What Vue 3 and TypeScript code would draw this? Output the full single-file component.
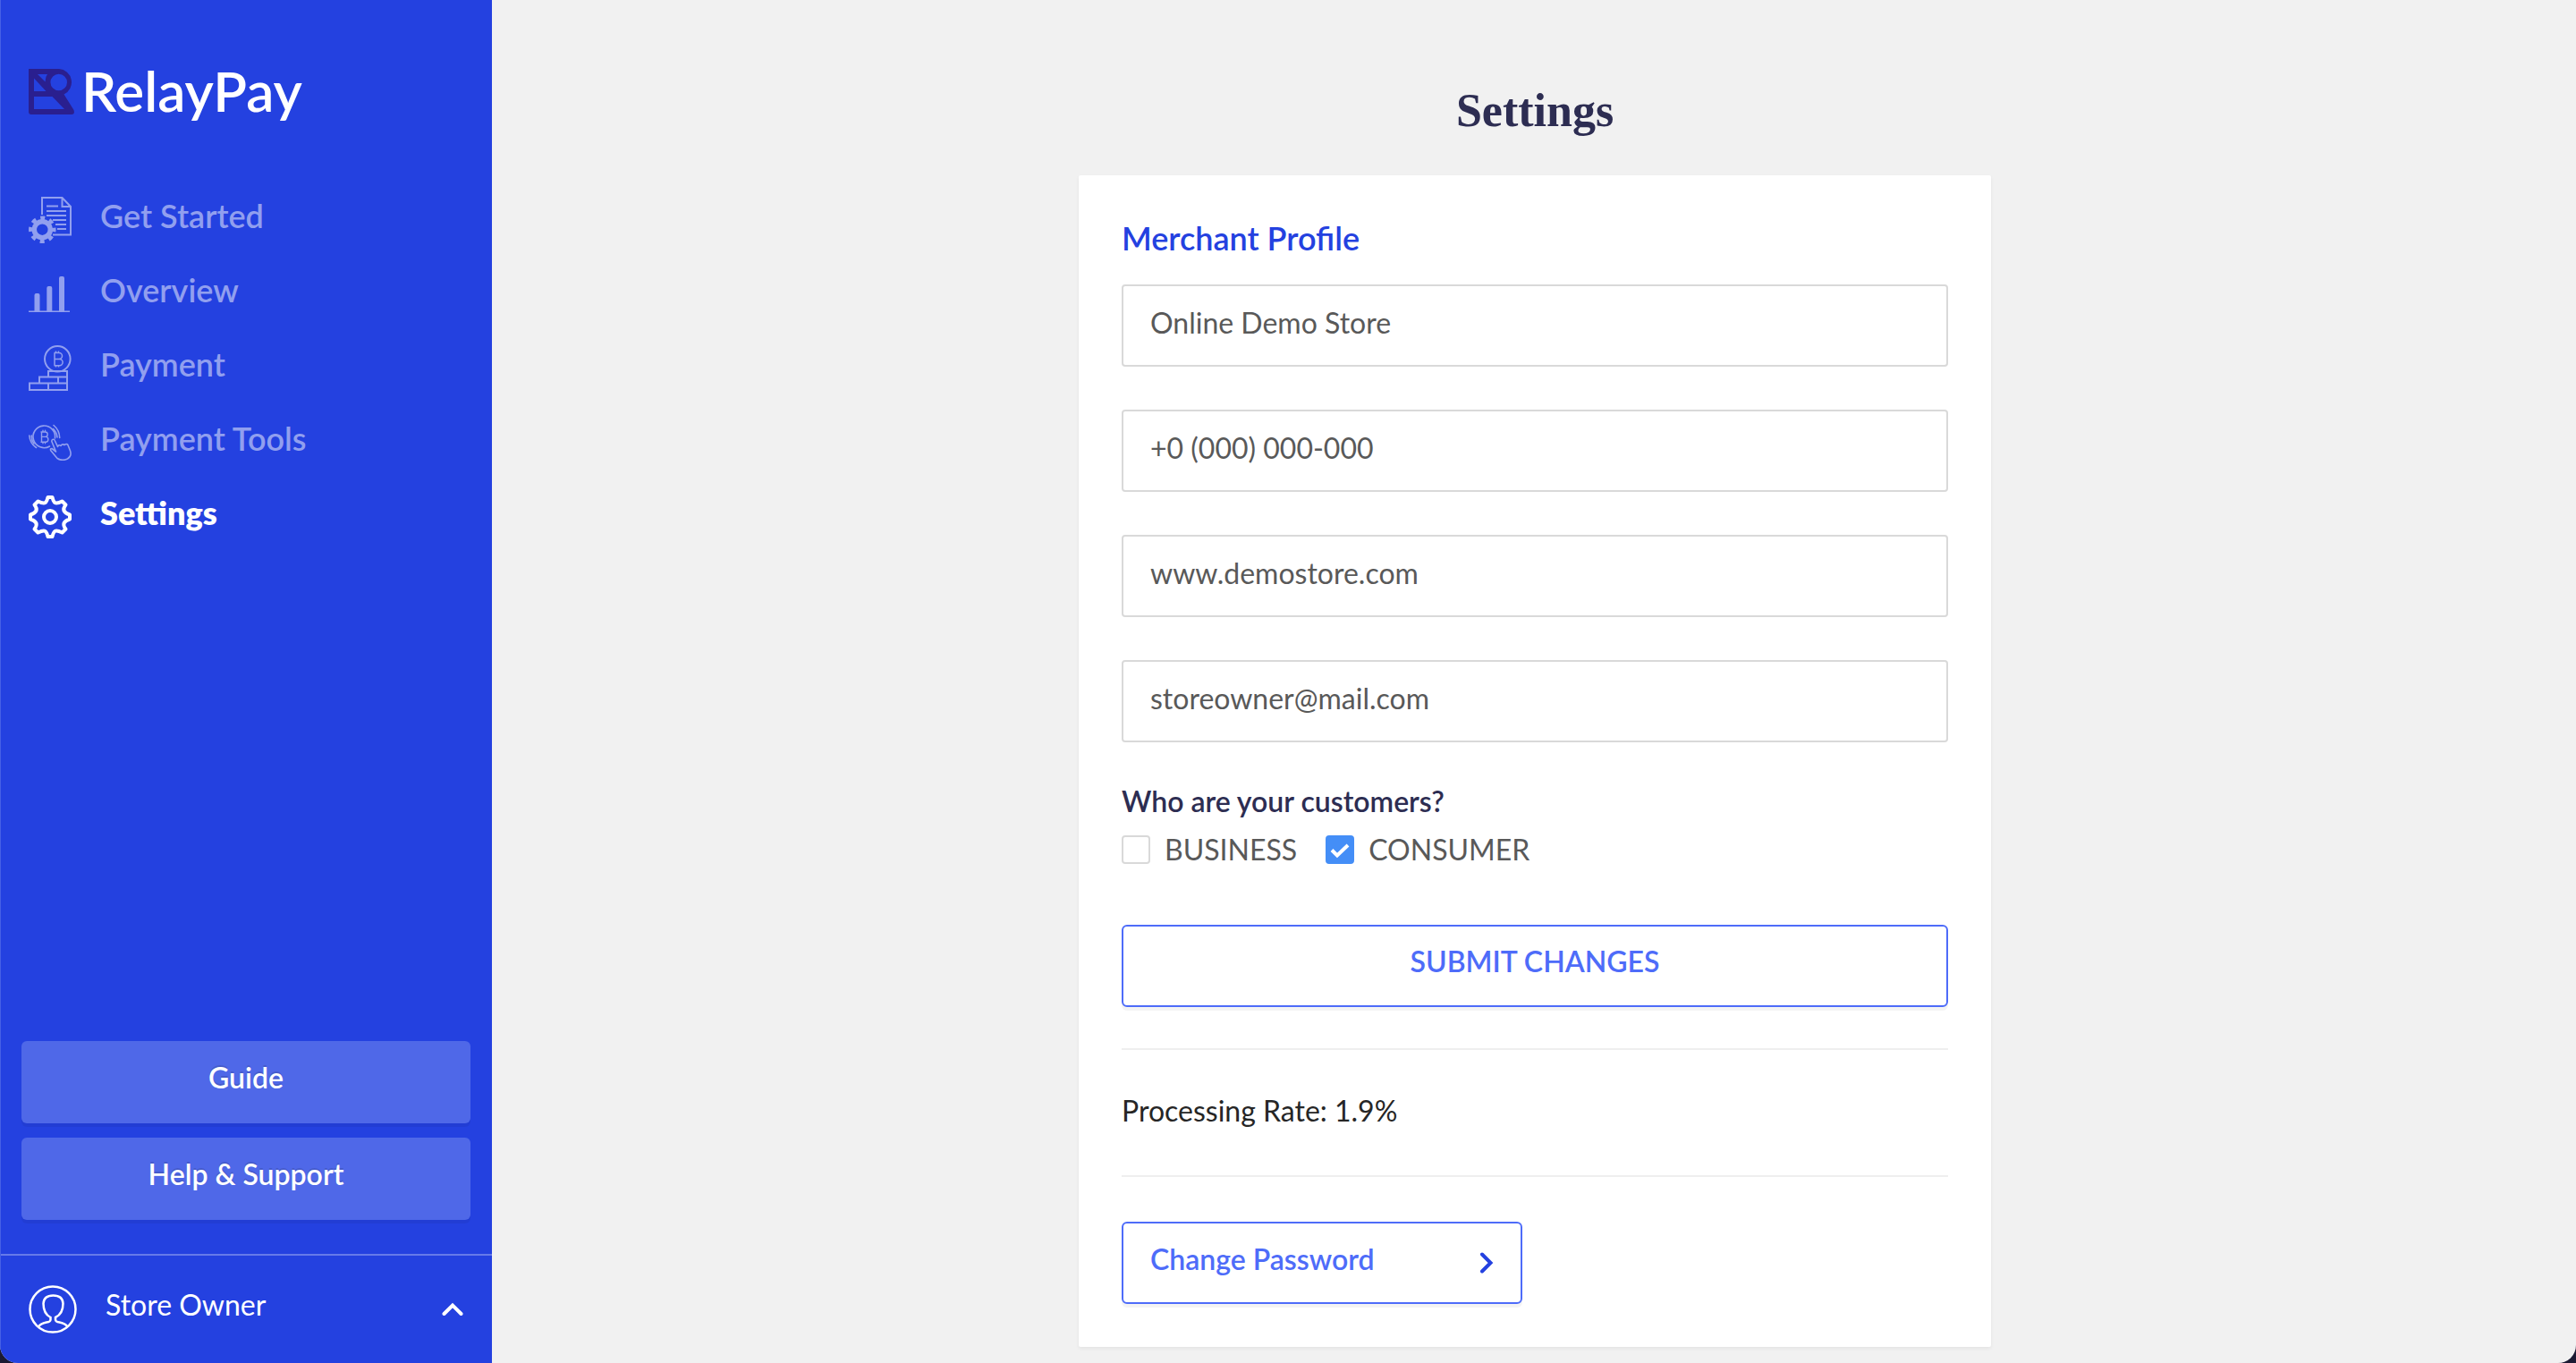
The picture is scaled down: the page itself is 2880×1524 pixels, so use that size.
<script setup lang="ts">
import { reactive, ref } from 'vue'

interface NavItem {
  id: string
  label: string
}

const navItems: NavItem[] = [
  { id: 'start', label: 'Get Started' },
  { id: 'overview', label: 'Overview' },
  { id: 'payment', label: 'Payment' },
  { id: 'tools', label: 'Payment Tools' },
  { id: 'settings', label: 'Settings' },
]
const activeId = ref('settings')

const profile = reactive({
  name: 'Online Demo Store',
  phone: '+0 (000) 000-000',
  website: 'www.demostore.com',
  email: 'storeowner@mail.com',
})

const customers = reactive({ business: false, consumer: true })
</script>

<template>
  <div class="shell">
    <aside class="sidebar">
      <a class="brand" href="#">
        <svg class="brand-mark" viewBox="0 0 51 51" width="51" height="51" aria-hidden="true">
          <path
            fill="#2a1f8f"
            fill-rule="evenodd"
            d="M0 0H34A15 15 0 0 1 39.500 28.500L50.500 46Q52 51 48 51H3Q0 51 0 48ZM33.700 5.700a9.300 9.300 0 1 0 0 18.600a9.300 9.300 0 1 0 0-18.600ZM10 6H21Q18.500 9 18.600 14.500ZM6 10.500V25H19.500ZM6 31V45H40L26.500 31Z"
          />
        </svg>
        <span class="brand-name">RelayPay</span>
      </a>

      <nav class="nav">
        <a
          v-for="item in navItems"
          :key="item.id"
          href="#"
          class="nav-link"
          :class="{ active: item.id === activeId }"
          @click.prevent="activeId = item.id"
        >
          <span class="nav-icon">
            <svg v-if="item.id === 'start'" viewBox="0 0 48 52" width="48" height="52" fill="none" stroke="currentColor" stroke-width="2">
              <path d="M15 20V1H37.500L47 11V42.500H27M37.500 1V11H47" />
              <path d="M20 10.500H33M20 16H42M20 21H42M27 26H42M30 31H42M32 36H42" />
              <circle cx="15.300" cy="36.700" r="9" stroke-width="5.500" />
              <circle cx="15.300" cy="36.700" r="13" stroke-width="4.500" stroke-dasharray="5 5.210" stroke-dashoffset="2.500" />
            </svg>
            <svg v-else-if="item.id === 'overview'" viewBox="0 0 48 40" width="48" height="40" fill="currentColor">
              <path d="M0 38.500H46V40H0Z" />
              <path d="M6.500 39V21Q6.500 19 8.500 19H10.500Q12.500 19 12.500 21V39ZM20.300 39V13Q20.300 11 22.300 11H24.300Q26.300 11 26.300 13V39ZM34 39V2Q34 0 36 0H38Q40 0 40 2V39Z" />
            </svg>
            <svg v-else-if="item.id === 'payment'" viewBox="0 0 48 51" width="48" height="51" fill="none" stroke="currentColor" stroke-width="2">
              <circle cx="32.300" cy="15.300" r="14.300" />
              <path stroke-width="1.500" d="M28.500 8.500H34a3.400 3.400 0 0 1 0 7H29M34.500 15.500a3.500 3.500 0 0 1 0 7.200H28.500M29 8.500V22.700M30.500 6.500V8.500M33.500 6.500V8.500M30.500 22.700V24.500M33.500 22.700V24.500" />
              <path d="M22 29H43V35.500H22ZM12 35.500H43V42.500H12ZM33 35.500V42.500M1 42.500H43V50H1ZM22 42.500V50" />
            </svg>
            <svg v-else-if="item.id === 'tools'" viewBox="0 0 48 41" width="48" height="41" fill="none" stroke="currentColor" stroke-width="1.600" stroke-linecap="round" stroke-linejoin="round">
              <path d="M23.500 25A12.300 12.300 0 1 1 29.500 16" />
              <path stroke-width="1.400" d="M14 9H18.500a2.600 2.600 0 0 1 0 5.400H14.500M19 14.400a2.900 2.900 0 0 1 0 5.800H14M14.500 9V20.200M16 7.300V9M18.500 7.300V9M16 20.200V21.800M18.500 20.200V21.800" />
              <path d="M28 1.500Q34.500 7 34.700 15.500M27.500 5.500Q31.500 9.500 32 15M.8 13Q1.500 22 8.500 26.500M3.300 13Q3 18 6 22" />
              <path d="M30.500 31L25.800 19.500Q25.800 17 28 17.300Q29 17.500 29.500 19L32.500 25.500Q33.500 22.500 36 24.500Q37.500 22 40 23.500Q43.500 21 44.500 25L46.500 30Q48.500 36 43.500 39Q37.500 42 32 38.500L25 30Q23.500 27.500 26 27.500L30.500 31" />
            </svg>
            <svg v-else viewBox="0 0 48 48" width="48" height="48" fill="none" stroke="currentColor" stroke-width="4" stroke-linejoin="round">
              <path d="M21.500 2H26.500Q28 8.500 31 8.500Q33.500 8.500 37.500 6.500L41.500 10.500Q38.500 14 39.500 17Q41 20 46 21.500V26.500Q41 28 39.500 31Q38.500 34 41.500 37.500L37.500 41.500Q33.500 39.500 31 39.500Q28 39.500 26.500 46H21.500Q20 39.500 17 39.500Q14.500 39.500 10.500 41.500L6.500 37.500Q9.500 34 8.500 31Q7 28 2 26.500V21.500Q7 20 8.500 17Q9.500 14 6.500 10.500L10.500 6.500Q14.500 8.500 17 8.500Q20 8.500 21.500 2Z" />
              <circle cx="24" cy="24" r="7" />
            </svg>
          </span>
          <span class="nav-label">{{ item.label }}</span>
        </a>
      </nav>

      <div class="side-actions">
        <button type="button" class="side-button">Guide</button>
        <button type="button" class="side-button">Help &amp; Support</button>
      </div>

      <button type="button" class="account">
        <svg viewBox="0 0 54 54" width="54" height="54" fill="none" stroke="currentColor" stroke-width="2.500" aria-hidden="true">
          <circle cx="27" cy="27" r="25.500" />
          <path d="M11 46.500Q13 43 20 41.500Q24.500 41 24.500 38.500V36Q16.500 32 16.500 20.500Q17 11.500 27.500 11.500Q38 11.500 38.500 20.500Q38.500 32 30 36V38.500Q30 41 34.500 41.500Q41.500 43 43.500 46.500" />
        </svg>
        <span class="account-name">Store Owner</span>
        <svg viewBox="0 0 24 16" width="24" height="16" fill="none" stroke="currentColor" stroke-width="4" stroke-linecap="round" aria-hidden="true">
          <path d="M2.500 13L12 3.500L21.500 13" />
        </svg>
      </button>
    </aside>

    <main class="content">
      <h1 class="title">Settings</h1>

      <section class="card">
        <form @submit.prevent>
          <h2 class="section-title">Merchant Profile</h2>
          <div class="fields">
            <input v-model="profile.name" class="field" type="text" aria-label="Store name" />
            <input v-model="profile.phone" class="field" type="tel" aria-label="Phone number" />
            <input v-model="profile.website" class="field" type="text" aria-label="Website" />
            <input v-model="profile.email" class="field" type="email" aria-label="Email" />
          </div>

          <fieldset class="customers">
            <legend class="question">Who are your customers?</legend>
            <div class="options">
              <label class="option">
                <input v-model="customers.business" class="check" type="checkbox" />
                <span>BUSINESS</span>
              </label>
              <label class="option">
                <input v-model="customers.consumer" class="check" type="checkbox" />
                <span>CONSUMER</span>
              </label>
            </div>
          </fieldset>

          <button type="submit" class="outline-button submit">SUBMIT CHANGES</button>
        </form>

        <p class="rate">Processing Rate: 1.9%</p>

        <button type="button" class="outline-button password">
          <span>Change Password</span>
          <svg viewBox="0 0 16 24" width="16" height="24" fill="none" stroke="#2441e0" stroke-width="4" stroke-linecap="round" aria-hidden="true">
            <path d="M3 2.500L12.500 12L3 21.500" />
          </svg>
        </button>
      </section>
    </main>
  </div>
</template>

<style>
body {
  background: #1b1a33;
}
</style>

<style scoped>
.shell,
.shell * {
  box-sizing: border-box;
}

.shell {
  display: flex;
  min-height: 100vh;
  overflow: hidden;
  border-radius: 0 0 20px 20px;
  background: #f1f1f1;
  font-family: Lato, 'Open Sans', sans-serif;
  font-size: 32px;
  line-height: 40px;
}

.shell button,
.shell input {
  font: inherit;
}

.sidebar {
  display: flex;
  flex: none;
  flex-direction: column;
  width: 550px;
  border-left: 1px solid #4660e6;
  background: #2441e0;
  color: #fff;
}

.brand {
  display: flex;
  align-items: center;
  gap: 8px;
  height: 204px;
  padding: 0 31px;
  color: #fff;
  text-decoration: none;
}

.brand-name {
  padding-bottom: 2px;
  font-size: 62px;
  font-weight: 600;
  line-height: 72px;
}

.nav {
  display: flex;
  flex-direction: column;
}

.nav-link {
  display: flex;
  align-items: center;
  gap: 32px;
  height: 83px;
  padding: 0 31px;
  color: #919fef;
  font-size: 36px;
  font-weight: 600;
  text-decoration: none;
}

.nav-link.active {
  color: #fff;
  font-weight: 800;
}

.nav-icon {
  display: flex;
  width: 48px;
}

.nav-label {
  padding-bottom: 10px;
}

.side-actions {
  display: flex;
  flex-direction: column;
  gap: 16px;
  margin-top: auto;
  padding: 0 24px 38px 23px;
}

.side-button {
  height: 92px;
  padding: 0 0 10px;
  border: 0;
  border-radius: 6px;
  background: #4f68e8;
  box-shadow: 0 4px 0 rgba(0, 0, 0, 0.05);
  color: #fff;
  text-shadow: 0 -2px 0 rgba(0, 0, 0, 0.12);
}

.shell .side-button,
.shell .outline-button {
  font-weight: 600;
}

.account {
  display: flex;
  align-items: center;
  gap: 32px;
  height: 122px;
  padding: 0 32px 0 31px;
  border: 0;
  border-top: 2px solid #667ae9;
  background: none;
  color: #fff;
  text-align: left;
}

.account-name {
  flex: 1;
  padding-bottom: 10px;
}

.content {
  flex: 1;
  padding: 94px 48px 18px 50px;
}

.title {
  margin: 0 0 42px;
  color: #2d2d52;
  font-family: 'Liberation Serif', serif;
  font-size: 52px;
  font-weight: 700;
  line-height: 60px;
  text-align: center;
}

.card {
  max-width: 1020px;
  margin: 0 auto;
  padding: 46px 48px 48px;
  border-radius: 2px;
  background: #fff;
  box-shadow: 0 2px 4px rgba(0, 0, 0, 0.06);
}

.section-title {
  margin: 0 0 28px;
  color: #2441e0;
  font-size: 36px;
  font-weight: 600;
  line-height: 48px;
}

.fields {
  display: flex;
  flex-direction: column;
  gap: 48px;
}

.field {
  width: 100%;
  height: 92px;
  padding: 0 30px 8px;
  border: 2px solid #d9d9d9;
  border-radius: 4px;
  outline: 0;
  background: #fff;
  color: #595959;
}

.customers {
  margin: 46px 0 68px;
  padding: 0;
  border: 0;
}

.question {
  padding: 0;
  color: #2d2d52;
  font-weight: 600;
}

.options {
  display: flex;
  gap: 32px;
  margin-top: 18px;
}

.option {
  display: flex;
  align-items: center;
  gap: 16px;
  height: 32px;
  color: #595959;
}

.check {
  width: 32px;
  height: 32px;
  margin: 0;
  border: 2px solid #d9d9d9;
  border-radius: 4px;
  appearance: none;
  background: #fff;
}

.check:checked {
  border-color: #448ef7;
  background: #448ef7
    url("data:image/svg+xml,%3Csvg xmlns='http://www.w3.org/2000/svg' viewBox='0 0 28 28'%3E%3Cpath d='M5 14.500l6 6L23 9' fill='none' stroke='white' stroke-width='4'/%3E%3C/svg%3E")
    center / 28px 28px no-repeat;
}

.outline-button {
  height: 92px;
  border: 2px solid #4e6cf9;
  border-radius: 6px;
  background: #fff;
  box-shadow: 0 4px 0 #f4f4f4;
  color: #4e6cf9;
}

.submit {
  width: 100%;
  padding: 0 0 10px;
}

.rate {
  margin: 46px 0 50px;
  padding: 48px 0 52px;
  border: solid #efefef;
  border-width: 2px 0;
  color: #262626;
}

.password {
  display: flex;
  align-items: center;
  justify-content: space-between;
  width: 448px;
  padding: 0 30px;
}

.password span {
  padding-bottom: 8px;
}
</style>
